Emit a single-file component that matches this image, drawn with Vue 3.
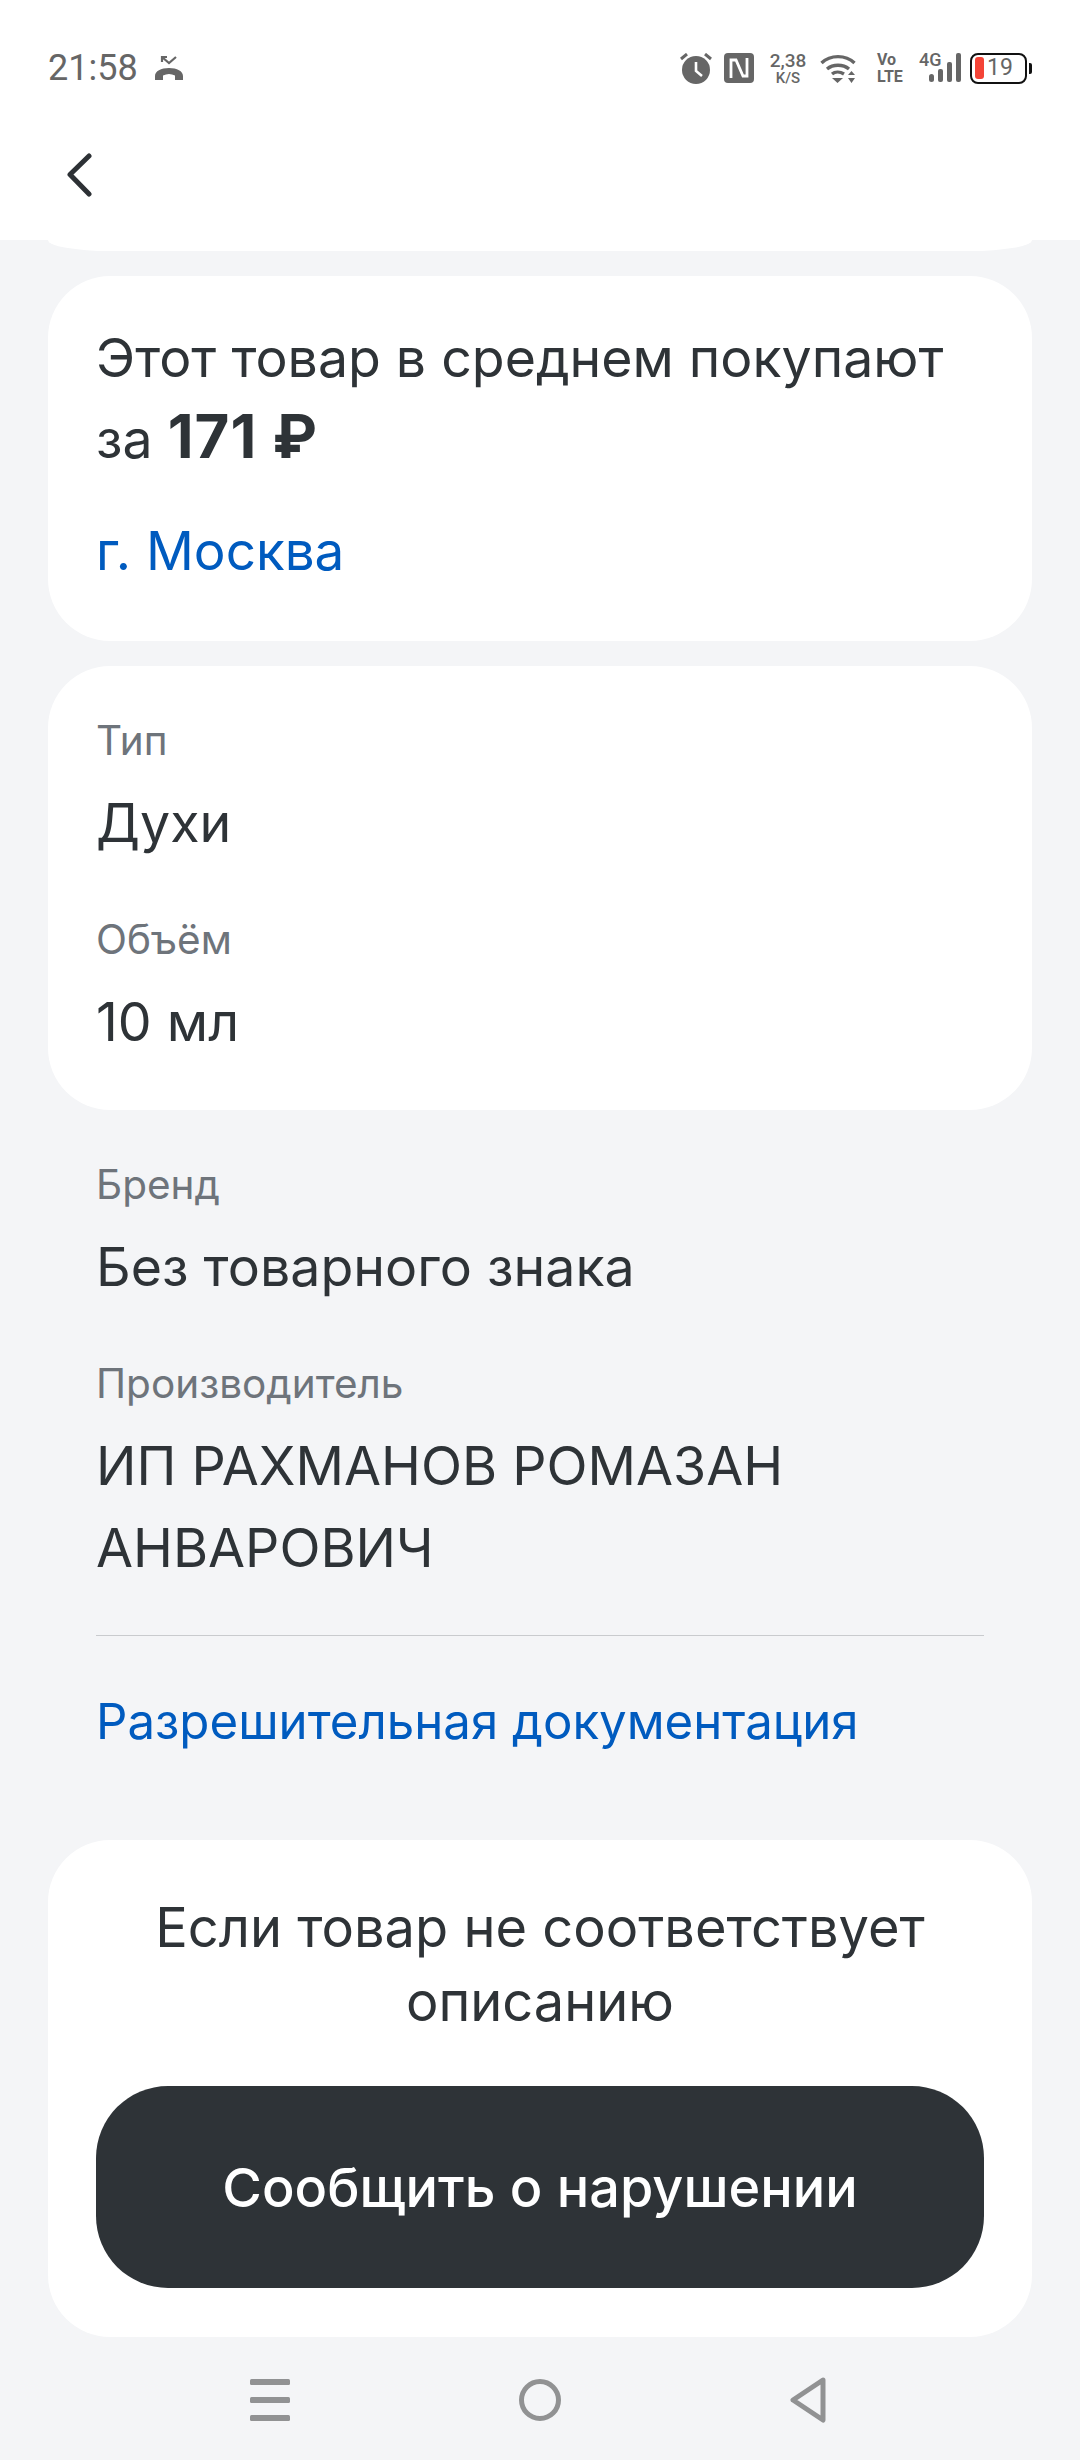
<script setup>
const specs = [
  { label: 'Тип', value: 'Духи' },
  { label: 'Объём', value: '10 мл' },
]
const info = [
  { label: 'Бренд', value: 'Без товарного знака' },
  { label: 'Производитель', value: 'ИП РАХМАНОВ РОМАЗАН АНВАРОВИЧ' },
]
</script>

<template>
  <div class="page">
    <header class="top">
      <div class="status">
        <div class="status-left">
          <span class="time">21:58</span>
          <svg class="missed" width="30" height="26" viewBox="0 0 30 26">
            <path d="M8 7V2h5M8 2l7 6 7-6" fill="none" stroke="#666" stroke-width="2.200" />
            <path d="M1 25v-4C1 16 7 13 15 13s14 3 14 8v4h-8v-4.500c-4-2-8-2-12 0V25z" fill="#666" />
          </svg>
        </div>
        <div class="status-right">
          <svg width="32" height="31" viewBox="0 0 32 31">
            <circle cx="16" cy="17" r="14" fill="#666" />
            <path d="M16 9v9l6 5" fill="none" stroke="#fff" stroke-width="2.600" />
            <path d="M1 6l6-5M31 6l-6-5" stroke="#666" stroke-width="3" />
          </svg>
          <svg class="nfc" width="30" height="30" viewBox="0 0 30 30">
            <path fill="#666" d="M4 0h22a4 4 0 0 1 4 4v22a4 4 0 0 1-4 4H4a4 4 0 0 1-4-4V4a4 4 0 0 1 4-4z" />
            <path d="M7 25V7h5l7 16h4V5" fill="none" stroke="#fff" stroke-width="2.800" />
          </svg>
          <div class="speed"><span>2,38</span><small>K/S</small></div>
          <svg class="wifi" width="36" height="30" viewBox="0 0 36 30">
            <path d="M1.500 10c9-8.500 24-8.500 33 0" fill="none" stroke="#666" stroke-width="3.400" />
            <path d="M7 16c6-5 16-5 22 0" fill="none" stroke="#666" stroke-width="3.400" />
            <path d="M12 21c3-2.500 8-2.500 12 0" fill="none" stroke="#666" stroke-width="3.400" />
            <path d="M12 25h11l-5.500 5zM28 22l3.500-4 3.500 4zM28 25h7l-3.500 5z" fill="#666" />
          </svg>
          <div class="volte"><span>Vo</span><span>LTE</span></div>
          <div class="net">
            <span class="net-label">4G</span>
            <svg width="32" height="30" viewBox="0 0 32 30">
              <rect x="0" y="21" width="5" height="8" rx="2.500" fill="#666" />
              <rect x="9" y="16" width="5" height="13" rx="2" fill="#666" />
              <rect x="18" y="9" width="5" height="20" rx="2" fill="#666" />
              <rect x="27" y="0" width="5" height="29" rx="2" fill="#666" />
            </svg>
          </div>
          <div class="battery">
            <div class="battery-body">
              <i class="battery-level"></i>
              <span>19</span>
            </div>
            <i class="battery-tip"></i>
          </div>
        </div>
      </div>
      <div class="nav">
        <svg width="26" height="44" viewBox="0 0 26 44">
          <path d="M23 3 4 21.500 23 41" fill="none" stroke="#2d3135" stroke-width="5" stroke-linecap="round" stroke-linejoin="round" />
        </svg>
      </div>
    </header>

    <main class="content">
      <div class="remnant"></div>

      <section class="card price">
        <p class="price-text">Этот товар в среднем покупают<br />за <b>171 ₽</b></p>
        <a class="link city">г. Москва</a>
      </section>

      <section class="card specs">
        <div v-for="s in specs" :key="s.label" class="field">
          <div class="label">{{ s.label }}</div>
          <div class="value">{{ s.value }}</div>
        </div>
      </section>

      <section class="plain">
        <div v-for="s in info" :key="s.label" class="field">
          <div class="label">{{ s.label }}</div>
          <div class="value">{{ s.value }}</div>
        </div>
        <hr class="rule" />
        <a class="link docs">Разрешительная документация</a>
      </section>

      <section class="card report">
        <p class="report-text">Если товар не соответствует описанию</p>
        <button class="report-btn">Сообщить о нарушении</button>
      </section>
    </main>

    <footer class="sysnav">
      <svg width="40" height="42" viewBox="0 0 40 42">
        <rect x="0" y="0" width="40" height="6" rx="1.500" fill="#919293" />
        <rect x="0" y="18" width="40" height="6" rx="1.500" fill="#919293" />
        <rect x="0" y="36" width="40" height="6" rx="1.500" fill="#919293" />
      </svg>
      <svg width="42" height="42" viewBox="0 0 42 42">
        <circle cx="21" cy="21" r="18.500" fill="none" stroke="#919293" stroke-width="5" />
      </svg>
      <svg class="tri" width="36" height="46" viewBox="0 0 36 46">
        <path d="M33 3 3 23l30 20z" fill="none" stroke="#919293" stroke-width="5" stroke-linejoin="round" />
      </svg>
    </footer>
  </div>
</template>

<style>
html, body { margin: 0; background: #f4f5f7; }
</style>

<style scoped>
.page {
  width: 1080px;
  height: 2460px;
  overflow: hidden;
  display: flex;
  flex-direction: column;
  background: #f4f5f7;
  font-family: Inter, "Noto Sans", sans-serif;
  color: #2e3337;
}
.top { height: 240px; background: #fff; flex: none; }
.status {
  height: 136px;
  box-sizing: border-box;
  padding: 50px 48px 0 48px;
  display: flex;
  justify-content: space-between;
  align-items: flex-start;
}
.status-left { display: flex; align-items: center; gap: 16px; height: 36px; }
.time { font: 36px/36px Roboto, sans-serif; color: #666; }
.status-right { display: flex; align-items: center; height: 36px; color: #666; }
.nfc { margin-left: 12px; }
.speed {
  margin-left: 15px;
  width: 38px;
  display: flex;
  flex-direction: column;
  align-items: center;
  font-family: Roboto, sans-serif;
  font-weight: 500;
  font-size: 19px;
  line-height: 19px;
}
.speed small { font-size: 15px; line-height: 16px; }
.wifi { margin-left: 13px; }
.volte {
  margin-left: 21px;
  width: 29px;
  display: flex;
  flex-direction: column;
  font: 700 16px/17px Roboto, sans-serif;
}
.net { margin-left: 13px; position: relative; width: 42px; height: 30px; display: flex; justify-content: flex-end; }
.net-label { position: absolute; left: 0; top: -2px; font: 500 18px/18px Roboto, sans-serif; }
.battery { margin-left: 9px; display: flex; align-items: center; }
.battery-body {
  width: 57px;
  height: 31px;
  box-sizing: border-box;
  border: 2.500px solid #111;
  border-radius: 8px;
  display: flex;
  align-items: center;
  padding-left: 3px;
  gap: 3px;
  font: 23px/26px Roboto, sans-serif;
  color: #666;
}
.battery-level { width: 9px; height: 22px; border-radius: 3px; background: #f44336; }
.battery-tip { width: 3px; height: 11px; margin-left: 2px; background: #111; border-radius: 0 2px 2px 0; }
.nav { height: 104px; padding-left: 66px; display: flex; align-items: flex-start; padding-top: 17px; box-sizing: border-box; }

.content { flex: 1; min-height: 0; padding: 0 48px; display: flex; flex-direction: column; }
.remnant {
  height: 11px;
  margin: 0 0 25px;
  background: #fff;
  border-radius: 0 0 62px 62px / 0 0 11px 11px;
}
.card { background: #fff; border-radius: 62px; padding: 0 48px; }
.price { height: 365px; box-sizing: border-box; padding-top: 42px; }
.price-text { margin: 0; font-size: 53.600px; line-height: 79px; }
.price-text b { font-weight: 700; font-size: 60px; letter-spacing: 1px; }
.link { color: #005bbf; display: block; }
.city { font-size: 53px; line-height: 60px; margin-top: 43px; }
.specs { margin-top: 25px; height: 444px; box-sizing: border-box; padding-top: 52px; }
.field + .field { margin-top: 53px; }
.label { font-size: 40.500px; line-height: 46px; color: #6e747b; }
.value { font-size: 53.700px; line-height: 82px; margin-top: 18px; }
.plain { padding: 52px 48px 0; }
.rule { margin: 46px 0 0; border: 0; height: 1px; background: #c9cbce; }
.docs { font-size: 49.200px; line-height: 60px; margin-top: 55px; white-space: nowrap; }
.report {
  margin-top: 89px;
  height: 497px;
  box-sizing: border-box;
  padding-top: 50px;
  text-align: center;
}
.report-text { margin: 0 auto; font-size: 54.200px; line-height: 74px; width: 800px; }
.report-btn {
  display: block;
  width: 100%;
  height: 202px;
  margin-top: 48px;
  border: 0;
  border-radius: 72px;
  background: #2e3337;
  color: #fff;
  font-family: inherit;
  font-size: 54px;
  font-weight: 500;
}
.sysnav {
  flex: none;
  height: 122px;
  box-sizing: border-box;
  display: grid;
  grid-template-columns: 40px 42px 36px;
  justify-content: start;
  column-gap: 229px;
  padding: 41px 0 0 250px;
  align-items: start;
}
.tri { margin-top: -2px; }
</style>
